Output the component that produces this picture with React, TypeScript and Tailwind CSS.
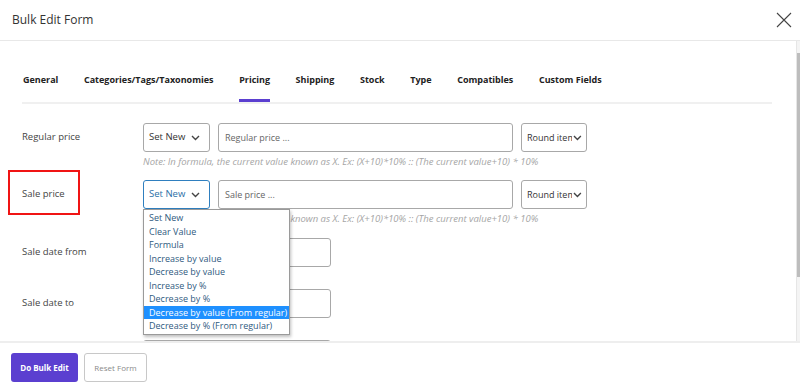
import { useState } from 'react'

const tabs = ['General', 'Categories/Tags/Taxonomies', 'Pricing', 'Shipping', 'Stock', 'Type', 'Compatibles', 'Custom Fields']

const options = [
  'Set New',
  'Clear Value',
  'Formula',
  'Increase by value',
  'Decrease by value',
  'Increase by %',
  'Decrease by %',
  'Decrease by value (From regular)',
  'Decrease by % (From regular)',
]

const note = 'Note: In formula, the current value known as X. Ex: (X+10)*10% :: (The current value+10) * 10%'

function Chevron({ className = '' }: { className?: string }) {
  return (
    <svg className={className} width="9" height="6" viewBox="0 0 9 6" fill="none" stroke="currentColor" strokeWidth={1.4}>
      <path d="M1 1l3.5 3.5L8 1" />
    </svg>
  )
}

function SelectBox({ focused = false }: { focused?: boolean }) {
  return (
    <div
      className={`flex h-[29px] w-[67px] shrink-0 items-center justify-between rounded-[3px] border pl-[5px] pr-[9px] text-[9.5px] ${
        focused ? 'border-[#2f7fbf] text-[#2a6ea6]' : 'border-[#a8a8a8] text-[#333]'
      }`}
    >
      <span>Set New</span>
      <Chevron className="text-[#444]" />
    </div>
  )
}

function RoundBox() {
  return (
    <div className="flex h-[29px] w-[66px] shrink-0 items-center rounded-[3px] border border-[#a8a8a8] pl-[5px] pr-[4px] text-[9px] text-[#333]">
      <span className="w-[46px] overflow-hidden whitespace-nowrap">Round item</span>
      <Chevron className="ml-[1px] text-[#444]" />
    </div>
  )
}

function Label({ children }: { children: React.ReactNode }) {
  return <div className="flex h-[29px] w-[121px] shrink-0 items-center text-[9.5px] text-[#444]">{children}</div>
}

export default function App() {
  const [tab] = useState('Pricing')

  return (
    <div className="flex h-[391px] w-[800px] flex-col overflow-hidden bg-white" style={{ fontFamily: '"Open Sans", sans-serif' }}>
      {/* Header */}
      <div className="flex h-[41px] shrink-0 items-center justify-between border-b border-[#e8e8e8] pl-[12px] pr-[8px]">
        <h1 className="text-[12px] text-[#333]">Bulk Edit Form</h1>
        <svg width="16" height="16" viewBox="0 0 16 16" stroke="#444" strokeWidth={1.1} className="-mt-px">
          <path d="M1 1l14 14M15 1L1 15" />
        </svg>
      </div>

      {/* Body */}
      <div className="flex h-[300px] shrink-0">
        <div className="relative flex-1 overflow-hidden pl-[22px] pr-[24px]">
          <div className="flex gap-[25.6px] border-b-2 border-[#f0f0f0] pl-px pt-[32px]">
            {tabs.map((t) => (
              <div
                key={t}
                className={`border-b-[3px] pb-[12px] text-[9px] font-bold leading-[14px] text-[#222] ${
                  t === tab ? 'border-[#5b3fd0]' : 'border-transparent'
                }`}
              >
                {t}
              </div>
            ))}
          </div>

          <div className="mt-[19px]">
            {/* Regular price */}
            <div className="flex h-[57px]">
              <Label>Regular price</Label>
              <div>
                <div className="flex gap-[8px]">
                  <SelectBox />
                  <div className="flex h-[29px] w-[295px] items-center rounded-[3px] border border-[#a8a8a8] pl-[6px] text-[9px] text-[#666]">Regular price ...</div>
                  <RoundBox />
                </div>
                <p className="mt-[3px] whitespace-nowrap text-[9.5px] italic leading-[14px] text-[#a5a5a5]">{note}</p>
              </div>
            </div>

            {/* Sale price */}
            <div className="flex h-[58px]">
              <div className="relative">
                <Label>Sale price</Label>
                <div className="absolute left-[-14px] top-[-10px] h-[45px] w-[72px] border-2 border-[#f01414]" />
              </div>
              <div className="relative">
                <div className="flex gap-[8px]">
                  <SelectBox focused />
                  <div className="flex h-[29px] w-[295px] items-center rounded-[3px] border border-[#a8a8a8] pl-[6px] text-[9px] text-[#666]">Sale price ...</div>
                  <RoundBox />
                </div>
                <p className="mt-[3px] whitespace-nowrap text-[9.5px] italic leading-[14px] text-[#a5a5a5]">{note}</p>

                {/* Open dropdown */}
                <ul className="absolute left-0 top-[29px] z-10 w-[147px] border border-[#9a9a9a] bg-white py-px shadow-[1px_2px_3px_rgba(0,0,0,0.25)]">
                  {options.map((o, i) => (
                    <li
                      key={o}
                      className={`h-[13.5px] whitespace-nowrap pl-[5px] text-[9px] leading-[13.5px] ${
                        i === 7 ? 'bg-[#1e90ff] text-white' : 'text-[#2f5a80]'
                      }`}
                    >
                      {o}
                    </li>
                  ))}
                </ul>
              </div>
            </div>

            {/* Sale date from */}
            <div className="flex h-[51px]">
              <Label>Sale date from</Label>
              <div className="h-[29px] w-[188px] rounded-[3px] border border-[#a8a8a8]" />
            </div>

            {/* Sale date to */}
            <div className="flex h-[51px]">
              <Label>Sale date to</Label>
              <div className="h-[29px] w-[188px] rounded-[3px] border border-[#a8a8a8]" />
            </div>

            <div className="flex h-[51px]">
              <Label>Tax status</Label>
              <div className="h-[29px] w-[188px] rounded-[3px] border border-[#a8a8a8]" />
            </div>
          </div>
        </div>

        {/* Scrollbar */}
        <div className="w-[4px] shrink-0 border-l border-[#e6e6e6] bg-[#f4f4f4]">
          <div className="ml-auto mt-[12px] h-[224px] w-[3px] bg-[#bdbdbd]" />
        </div>
      </div>

      {/* Footer */}
      <div className="flex flex-1 items-start gap-[6px] border-t-2 border-[#eeeeee] pl-[11px] pt-[10px]">
        <button className="flex h-[29px] w-[67px] items-center justify-center whitespace-nowrap rounded-[3px] bg-[#5b3fd0] text-[8px] font-bold leading-[12px] text-white">Do Bulk Edit</button>
        <button className="flex h-[29px] w-[63px] items-center justify-center whitespace-nowrap rounded-[3px] border border-[#c8c8c8] bg-white text-[8px] leading-[12px] text-[#8a8a8a]">Reset Form</button>
      </div>
    </div>
  )
}
